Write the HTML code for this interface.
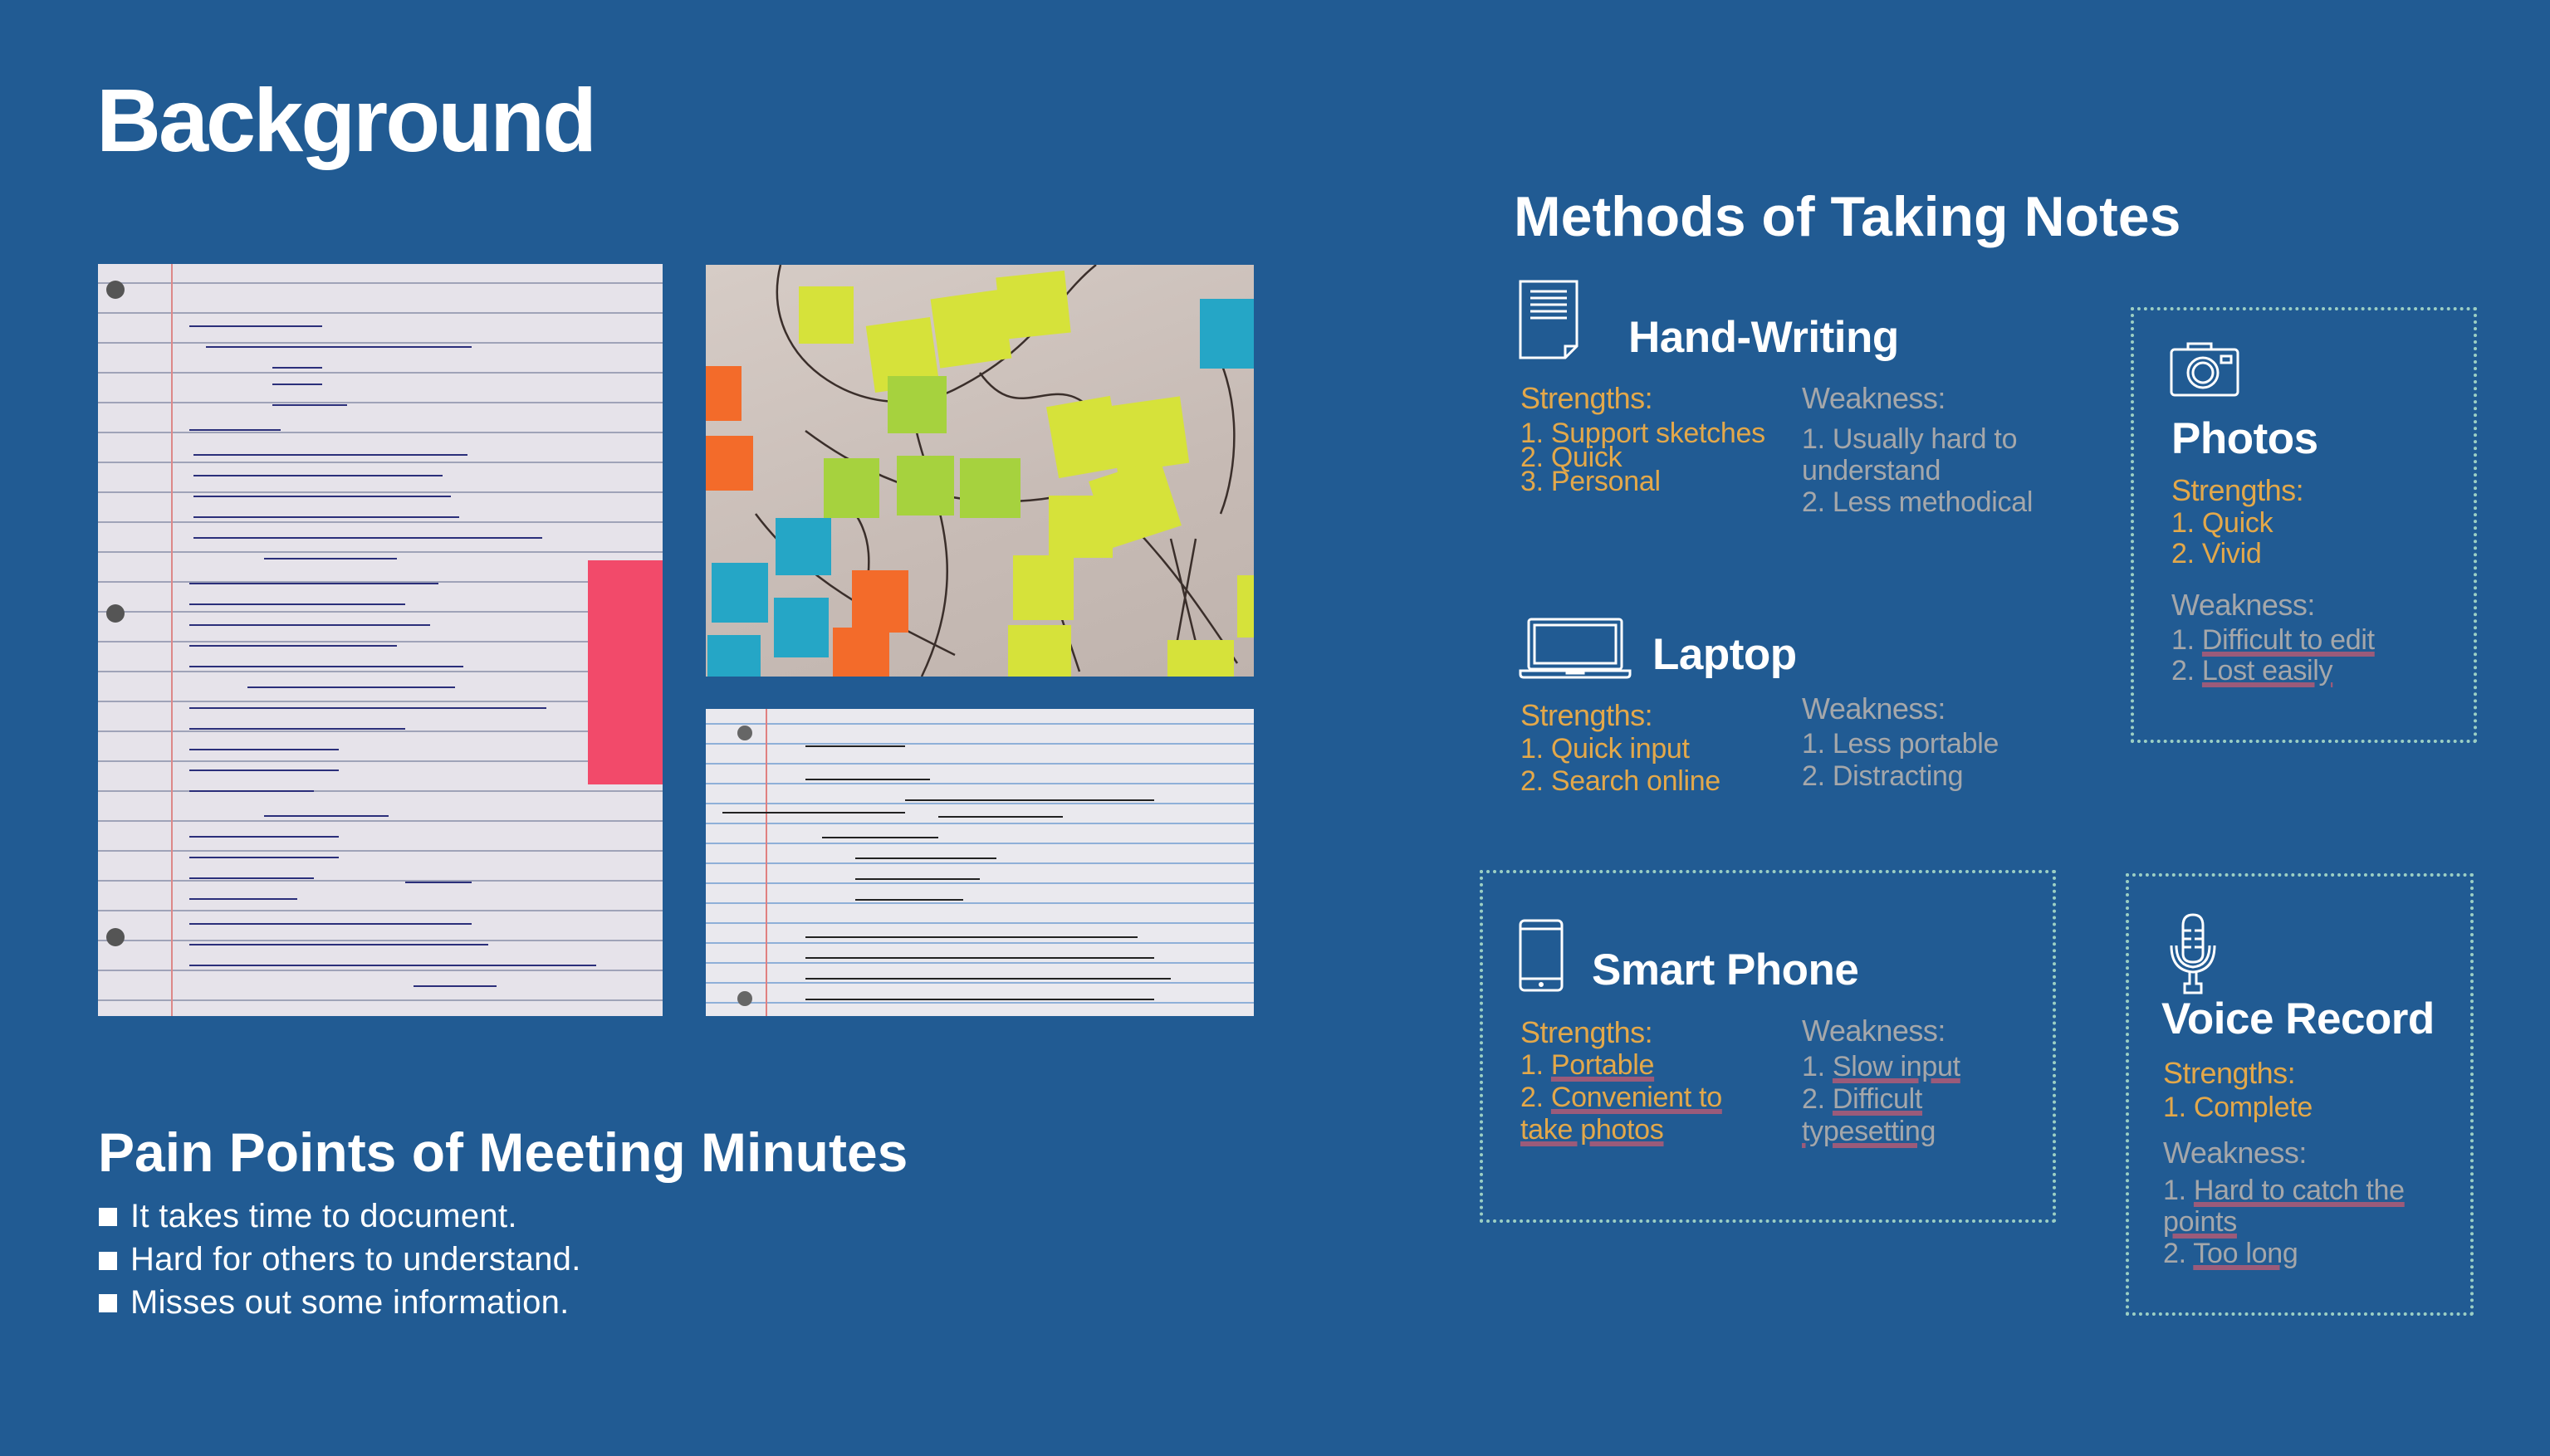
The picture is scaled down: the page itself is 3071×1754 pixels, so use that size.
<!DOCTYPE html>
<html><head><meta charset="utf-8"><style>
*{margin:0;padding:0;box-sizing:border-box}
body{width:3071px;height:1754px;background:#215b93;position:relative;overflow:hidden;font-family:"Liberation Sans",sans-serif;color:#fff}
.a{position:absolute;white-space:nowrap}
.h1{font-size:108px;font-weight:bold;letter-spacing:-3px;line-height:120px}
.h2{font-size:68px;font-weight:bold;letter-spacing:0px;line-height:80px}
.t{font-size:53px;font-weight:bold;letter-spacing:-0.5px;line-height:60px}
.s{font-size:36px;letter-spacing:-0.5px;line-height:44px;color:#e3a84a}
.w{font-size:36px;letter-spacing:-0.5px;line-height:44px;color:#a5a7aa}
.l{font-size:34px;letter-spacing:-0.3px}
u{text-decoration:underline;text-decoration-color:#9b5b7a;text-decoration-thickness:6px;text-underline-offset:3px}
.box{position:absolute;border:4px dotted #9ccfc4}
.photo{position:absolute;overflow:hidden}
.n{position:absolute}
.Y{background:#d6e23a}.G{background:#a6d23e}.O{background:#f36b2a}.B{background:#25a6c6}
</style></head><body>

<div class="a h1" style="left:116px;top:85px">Background</div>

<div class="photo" style="left:118px;top:318px;width:680px;height:906px;background:repeating-linear-gradient(180deg,#e6e3ea 0 22px,#9fa3b8 22px 24px,#e6e3ea 24px 36px);">
 <div class="n" style="left:88px;top:0;width:2px;height:906px;background:#d88"></div>
 <div class="n" style="left:590px;top:357px;width:90px;height:270px;background:#f24a6a"></div>
 <div class="n" style="left:10px;top:20px;width:22px;height:22px;border-radius:50%;background:#555"></div>
 <div class="n" style="left:10px;top:410px;width:22px;height:22px;border-radius:50%;background:#555"></div>
 <div class="n" style="left:10px;top:800px;width:22px;height:22px;border-radius:50%;background:#555"></div>
 <svg class="n" style="left:0;top:0" width="680" height="906"><g stroke="#2b2f7a" stroke-width="2" fill="none">
 <path d="M110 75 h160 M130 100 h320 M210 125 h60 M210 145 h60 M210 170 h90 M110 200 h110 M115 230 h330 M115 255 h300 M115 280 h310 M115 305 h320 M115 330 h420 M200 355 h160 M110 385 h300 M110 410 h260 M110 435 h290 M110 460 h250 M110 485 h330 M180 510 h250 M110 535 h430 M110 560 h260 M110 585 h180 M110 610 h180 M110 635 h150 M200 665 h150 M110 690 h180 M110 715 h180 M110 740 h150 M110 765 h130 M370 745 h80 M110 795 h340 M110 820 h360 M110 845 h490 M380 870 h100"/></g></svg>
</div>

<div class="photo" style="left:850px;top:319px;width:660px;height:496px;background:linear-gradient(160deg,#d6ccc6,#c7bbb5 60%,#bfb3ad)">
 <svg class="n" style="left:0;top:0" width="660" height="496"><g stroke="#3a2e2a" stroke-width="2.5" fill="none">
 <path d="M90 0 C60 120 200 200 300 150 S 420 40 470 0 M120 200 C200 260 300 300 420 280 M60 300 C120 380 200 420 300 470 M500 300 C560 360 600 420 640 480 M420 400 L450 490 M590 330 L560 496 M560 330 L600 496 M250 180 C260 260 330 350 260 496 M180 300 C220 360 170 420 200 496 M330 130 C380 200 420 120 470 180 M600 80 C650 150 640 250 620 300"/></g></svg>
 <div class="n Y" style="left:112px;top:26px;width:66px;height:69px"></div>
 <div class="n Y" style="left:198px;top:68px;width:78px;height:81px;transform:rotate(-8deg)"></div>
 <div class="n Y" style="left:276px;top:35px;width:87px;height:84px;transform:rotate(-8deg)"></div>
 <div class="n Y" style="left:353px;top:11px;width:83px;height:75px;transform:rotate(-6deg)"></div>
 <div class="n B" style="left:595px;top:41px;width:67px;height:84px"></div>
 <div class="n G" style="left:219px;top:134px;width:71px;height:69px"></div>
 <div class="n O" style="left:0;top:122px;width:43px;height:66px"></div>
 <div class="n O" style="left:0;top:206px;width:57px;height:66px"></div>
 <div class="n G" style="left:142px;top:233px;width:67px;height:72px"></div>
 <div class="n G" style="left:230px;top:230px;width:69px;height:72px"></div>
 <div class="n G" style="left:306px;top:233px;width:73px;height:72px"></div>
 <div class="n Y" style="left:417px;top:164px;width:78px;height:87px;transform:rotate(-10deg)"></div>
 <div class="n Y" style="left:490px;top:164px;width:87px;height:81px;transform:rotate(-8deg)"></div>
 <div class="n Y" style="left:472px;top:245px;width:90px;height:85px;transform:rotate(-18deg)"></div>
 <div class="n Y" style="left:413px;top:278px;width:77px;height:75px"></div>
 <div class="n B" style="left:84px;top:305px;width:67px;height:69px"></div>
 <div class="n B" style="left:7px;top:359px;width:68px;height:72px"></div>
 <div class="n B" style="left:82px;top:401px;width:66px;height:72px"></div>
 <div class="n O" style="left:176px;top:368px;width:68px;height:75px"></div>
 <div class="n O" style="left:153px;top:437px;width:68px;height:60px"></div>
 <div class="n Y" style="left:370px;top:350px;width:73px;height:78px"></div>
 <div class="n Y" style="left:364px;top:434px;width:76px;height:63px"></div>
 <div class="n Y" style="left:556px;top:452px;width:80px;height:45px"></div>
 <div class="n B" style="left:2px;top:446px;width:64px;height:51px"></div>
 <div class="n Y" style="left:640px;top:374px;width:22px;height:75px"></div>
</div>

<div class="photo" style="left:850px;top:854px;width:660px;height:370px;background:repeating-linear-gradient(180deg,#eae9ee 0 17px,#8fb0d8 17px 19px,#eae9ee 19px 24px)">
 <div class="n" style="left:72px;top:0;width:2px;height:370px;background:#e08080"></div>
 <div class="n" style="left:38px;top:20px;width:18px;height:18px;border-radius:50%;background:#666"></div>
 <div class="n" style="left:38px;top:340px;width:18px;height:18px;border-radius:50%;background:#666"></div>
 <svg class="n" style="left:0;top:0" width="660" height="370"><g stroke="#222" stroke-width="2" fill="none">
 <path d="M120 45 h120 M120 85 h150 M240 110 h300 M280 130 h150 M20 125 h220 M140 155 h140 M180 180 h170 M180 205 h150 M180 230 h130 M120 275 h400 M120 300 h420 M120 325 h440 M120 350 h420"/></g></svg>
</div>

<div class="a h2" style="left:1823px;top:221px">Methods of Taking Notes</div>

<svg class="a" style="left:1829px;top:337px" width="74" height="96" viewBox="0 0 74 96"><g stroke="#fff" stroke-width="3" fill="none"><path d="M2 2 H70 V80 L56 94 H2 Z M56 94 V80 H70"/><path d="M14 14 H58 M14 22 H58 M14 30 H58 M14 38 H58 M14 46 H58"/></g></svg>
<div class="a t" style="left:1961px;top:377px">Hand-Writing</div>
<div class="a s" style="left:1831px;top:458px">Strengths:</div>
<div class="a s l" style="left:1831px;top:508px;line-height:29px">1. Support sketches<br>2. Quick<br>3. Personal</div>
<div class="a w" style="left:2170px;top:458px">Weakness:</div>
<div class="a w l" style="left:2170px;top:510px;line-height:38px">1. Usually hard to<br>understand<br>2. Less methodical</div>

<svg class="a" style="left:1829px;top:744px" width="136" height="74" viewBox="0 0 136 74"><g stroke="#fff" stroke-width="3" fill="none"><rect x="12" y="2" width="112" height="60" rx="3"/><rect x="19" y="9" width="98" height="46"/><path d="M2 64 H134 V68 Q134 72 130 72 H6 Q2 72 2 68 Z M58 64 V67 H78 V64"/></g></svg>
<div class="a t" style="left:1990px;top:759px">Laptop</div>
<div class="a s" style="left:1831px;top:840px">Strengths:</div>
<div class="a s l" style="left:1831px;top:883px;line-height:39px">1. Quick input<br>2. Search online</div>
<div class="a w" style="left:2170px;top:832px">Weakness:</div>
<div class="a w l" style="left:2170px;top:877px;line-height:39px">1. Less portable<br>2. Distracting</div>

<div class="box" style="left:2566px;top:370px;width:417px;height:525px"></div>
<svg class="a" style="left:2613px;top:409px" width="86" height="70" viewBox="0 0 86 70"><g stroke="#fff" stroke-width="3" fill="none"><rect x="2" y="12" width="80" height="55" rx="4"/><path d="M22 12 V5 H50 V12"/><circle cx="40" cy="40" r="18"/><circle cx="40" cy="40" r="12"/><rect x="62" y="20" width="12" height="8"/></g></svg>
<div class="a t" style="left:2615px;top:499px">Photos</div>
<div class="a s" style="left:2615px;top:569px">Strengths:</div>
<div class="a s l" style="left:2615px;top:612px;line-height:37px">1. Quick<br>2. Vivid</div>
<div class="a w" style="left:2615px;top:707px">Weakness:</div>
<div class="a w l" style="left:2615px;top:753px;line-height:37px">1. <u>Difficult to edit</u><br>2. <u>Lost easily</u></div>

<div class="box" style="left:1782px;top:1048px;width:694px;height:425px"></div>
<svg class="a" style="left:1829px;top:1107px" width="56" height="90" viewBox="0 0 56 90"><g stroke="#fff" stroke-width="3" fill="none"><rect x="2" y="2" width="50" height="84" rx="5"/><path d="M2 12 H52 M2 72 H52"/><circle cx="27" cy="79" r="1.5" fill="#fff"/></g></svg>
<div class="a t" style="left:1917px;top:1139px">Smart Phone</div>
<div class="a s" style="left:1831px;top:1222px">Strengths:</div>
<div class="a s l" style="left:1831px;top:1264px;line-height:39px">1. <u>Portable</u><br>2. <u>Convenient to</u><br><u>take photos</u></div>
<div class="a w" style="left:2170px;top:1220px">Weakness:</div>
<div class="a w l" style="left:2170px;top:1266px;line-height:39px">1. <u>Slow input</u><br>2. <u>Difficult</u><br><u>typesetting</u></div>

<div class="box" style="left:2560px;top:1052px;width:419px;height:533px"></div>
<svg class="a" style="left:2609px;top:1099px" width="64" height="100" viewBox="0 0 64 100"><g stroke="#fff" stroke-width="3" fill="none"><path d="M20 50 V16 Q20 3 32 3 Q44 3 44 16 V50 Q44 60 32 60 Q20 60 20 50 Z"/><path d="M20 22 H30 M34 22 H44 M20 32 H30 M34 32 H44 M20 42 H30 M34 42 H44"/><path d="M6 40 Q6 70 32 72 Q58 70 58 40 M12 40 Q12 64 32 66 Q52 64 52 40"/><path d="M28 72 V86 H22 V97 H42 V86 H36 V72"/></g></svg>
<div class="a t" style="left:2603px;top:1198px">Voice Record</div>
<div class="a s" style="left:2605px;top:1271px">Strengths:</div>
<div class="a s l" style="left:2605px;top:1315px;line-height:38px">1. Complete</div>
<div class="a w" style="left:2605px;top:1367px">Weakness:</div>
<div class="a w l" style="left:2605px;top:1415px;line-height:38px">1. <u>Hard to catch the</u><br><u>points</u><br>2. <u>Too long</u></div>

<div class="a" style="left:118px;top:1352px;font-size:66px;font-weight:bold;letter-spacing:0px;line-height:72px">Pain Points of Meeting Minutes</div>
<div class="a" style="left:119px;top:1455px;width:22px;height:22px;background:#fff"></div>
<div class="a" style="left:119px;top:1508px;width:22px;height:22px;background:#fff"></div>
<div class="a" style="left:119px;top:1559px;width:22px;height:22px;background:#fff"></div>
<div class="a" style="left:157px;top:1439px;font-size:40px;letter-spacing:0.3px;line-height:52px">It takes time to document.<br>Hard for others to understand.<br>Misses out some information.</div>

</body></html>
